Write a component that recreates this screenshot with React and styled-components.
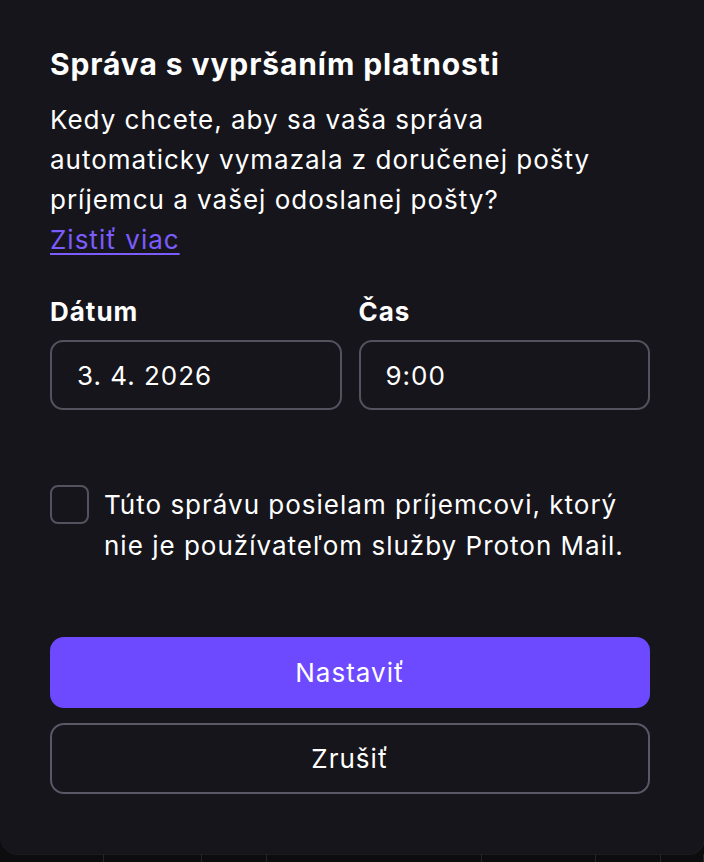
import React from "react";
import styled, { createGlobalStyle } from "styled-components";

const Global = createGlobalStyle`
  html, body { margin: 0; padding: 0; background: #0d0d10; }
  body {
    font-family: Inter, "Noto Sans", "Liberation Sans", sans-serif;
    -webkit-font-smoothing: antialiased;
  }
  * { box-sizing: border-box; }
`;

const Page = styled.div`
  width: 704px;
  height: 862px;
  display: flex;
  flex-direction: column;
  overflow: hidden;
  background: #0d0d10;
`;

const Modal = styled.div`
  height: 854px;
  flex: none;
  background: #16151b;
  border-radius: 0 0 16px 16px;
  box-shadow: 1px 1px 0 rgba(255, 255, 255, 0.06);
  padding: 46px 54px 0 50px;
  display: flex;
  flex-direction: column;
  color: #ffffff;
  letter-spacing: 1px;
`;

const Title = styled.h2`
  margin: 0;
  font-size: 30px;
  line-height: 36px;
  font-weight: 700;
  letter-spacing: 0.9px;
  color: #ffffff;
`;

const Text = styled.p`
  margin: 18px 0 0;
  font-size: 26px;
  line-height: 40px;
  font-weight: 400;
  color: #ffffff;
`;

const Link = styled.a`
  color: #7c5cff;
  text-decoration: underline;
  text-underline-offset: 4px;
  text-decoration-thickness: 1.5px;
  cursor: pointer;
`;

const Fields = styled.div`
  margin-top: 36px;
  display: grid;
  grid-template-columns: 1fr 1fr;
  column-gap: 17px;
`;

const Field = styled.div`
  display: flex;
  flex-direction: column;
  gap: 12px;
`;

const Label = styled.label`
  font-size: 26px;
  line-height: 32px;
  font-weight: 700;
  color: #ffffff;
`;

const Input = styled.div`
  height: 70px;
  border: 2px solid #55525f;
  border-radius: 13px;
  display: flex;
  align-items: center;
  padding-left: 25px;
  font-size: 26px;
  color: #ffffff;
`;

const CheckRow = styled.div`
  margin-top: 75px;
  display: flex;
  align-items: flex-start;
  gap: 15px;
`;

const Box = styled.span`
  width: 39px;
  height: 39px;
  flex: none;
  border: 2px solid #55525f;
  border-radius: 8px;
`;

const CheckText = styled.span`
  font-size: 26px;
  line-height: 41px;
  margin-top: -1px;
  color: #ffffff;
`;

const Actions = styled.div`
  margin-top: 71px;
  display: flex;
  flex-direction: column;
  gap: 15px;
`;

const Button = styled.button`
  height: 71px;
  width: 100%;
  border-radius: 14px;
  font-family: inherit;
  font-size: 26px;
  font-weight: 400;
  letter-spacing: 1px;
  color: #ffffff;
  cursor: pointer;
  background: ${(p) => (p.$primary ? "#6d4aff" : "transparent")};
  border: 2px solid ${(p) => (p.$primary ? "#6d4aff" : "#5a5766")};
`;

const Strip = styled.div`
  flex: 1;
  display: flex;
`;

const Cell = styled.span`
  flex: none;
  width: ${(p) => p.$w}px;
  border-right: 1px solid #24242a;
`;

const cells = [
  { w: 104 }, { w: 98 }, { w: 65 }, { w: 215 }, { w: 114 }, { w: 65 }, { w: 43 },
];

export default function App() {
  return (
    <Page>
      <Global />
      <Modal>
        <Title>Správa s vypršaním platnosti</Title>
        <Text>
          Kedy chcete, aby sa vaša správa automaticky vymazala z doručenej pošty
          príjemcu a vašej odoslanej pošty?
          <br />
          <Link>Zistiť viac</Link>
        </Text>
        <Fields>
          <Field>
            <Label>Dátum</Label>
            <Input>3. 4. 2026</Input>
          </Field>
          <Field>
            <Label>Čas</Label>
            <Input>9:00</Input>
          </Field>
        </Fields>
        <CheckRow>
          <Box />
          <CheckText>
            Túto správu posielam príjemcovi, ktorý nie je používateľom služby Proton Mail.
          </CheckText>
        </CheckRow>
        <Actions>
          <Button $primary>Nastaviť</Button>
          <Button>Zrušiť</Button>
        </Actions>
      </Modal>
      <Strip>
        {cells.map((c, i) => (
          <Cell key={i} $w={c.w} />
        ))}
      </Strip>
    </Page>
  );
}
